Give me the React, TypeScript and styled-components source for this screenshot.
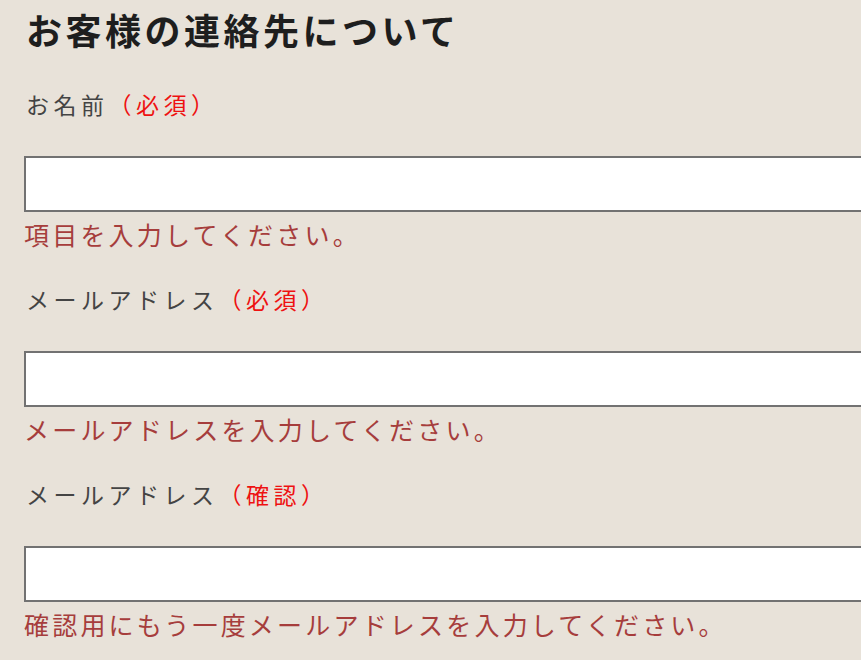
import React from "react"
import styled, { createGlobalStyle } from "styled-components"

const GlobalStyle = createGlobalStyle`
  html, body {
    margin: 0;
    padding: 0;
    overflow: hidden;
    background: #e8e2d9;
  }
  body {
    font-family: "Noto Sans CJK JP", "Noto Sans", sans-serif;
  }
`

const Form = styled.section`
  width: 900px;
  padding: 4px 0 0 24px;
  display: flex;
  flex-direction: column;
`

const Heading = styled.h2`
  margin: 0;
  font-size: 36px;
  line-height: 50px;
  font-weight: 700;
  letter-spacing: 3.5px;
  color: #1e1e1e;
  padding-left: 2px;
`

const Field = styled.div`
  display: flex;
  flex-direction: column;
  margin-top: 32px;

  & + & {
    margin-top: 29px;
  }
`

const Label = styled.label`
  font-size: 23px;
  line-height: 36px;
  letter-spacing: 4.5px;
  color: #444;
  padding-left: 2px;
`

const Note = styled.span`
  color: #ee1111;
`

const Input = styled.input`
  box-sizing: border-box;
  margin-top: 34px;
  width: 100%;
  height: 56px;
  border: 2px solid #727272;
  background: #fff;
  outline: none;
`

const ErrorText = styled.p`
  margin: 4px 0 0;
  font-size: 25px;
  line-height: 36px;
  letter-spacing: 3.2px;
  color: #a63d3c;
`

const fields = [
  { label: "お名前", note: "必須", error: "項目を入力してください。" },
  { label: "メールアドレス", note: "必須", error: "メールアドレスを入力してください。" },
  {
    label: "メールアドレス",
    note: "確認",
    error: "確認用にもう一度メールアドレスを入力してください。",
  },
]

const App = () => (
  <>
    <GlobalStyle />
    <Form>
      <Heading>お客様の連絡先について</Heading>
      {fields.map((field, i) => (
        <Field key={i}>
          <Label>
            {field.label}
            <Note>（{field.note}）</Note>
          </Label>
          <Input type="text" />
          <ErrorText>{field.error}</ErrorText>
        </Field>
      ))}
    </Form>
  </>
)

export default App
